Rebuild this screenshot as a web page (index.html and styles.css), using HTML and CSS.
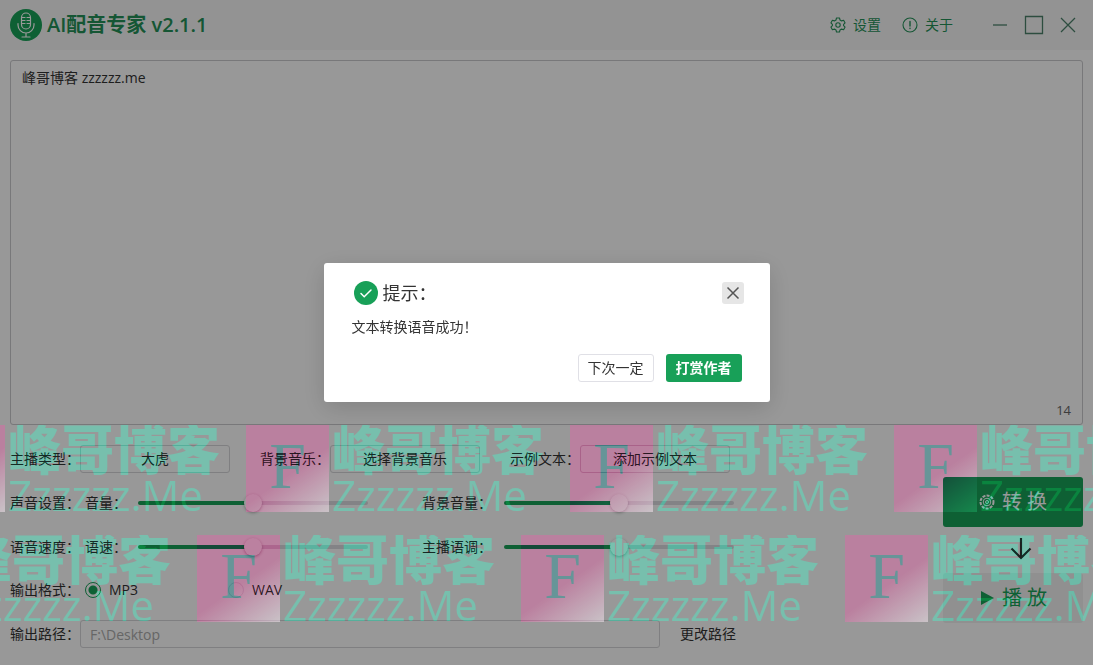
FILE: index.html
```html
<!DOCTYPE html>
<html lang="zh-CN">

<head>
    <meta charset="UTF-8">
    <meta name="viewport" content="width=device-width, initial-scale=1.0">
    <title>AI配音专家 v2.1.1</title>
    <link rel="stylesheet" href="styles.css">
</head>

<body>
    <header class="titlebar">
        <svg class="logo" viewBox="0 0 32 32" fill="none" stroke="#fff" stroke-width="1.2" stroke-linecap="round">
            <circle cx="16" cy="16" r="16" fill="#18a058" stroke="none" />
            <rect x="11.5" y="4" width="9" height="16" rx="4.5" />
            <path d="M12 8.5h3M12 11.5h3M12 14.5h3M17 8.5h3M17 11.5h3M17 14.5h3" />
            <path d="M8 14.5v1.5a8 8 0 0 0 16 0v-1.5M16 24v4M12 28h8" />
        </svg>
        <h1>AI配音专家 v2.1.1</h1>
        <nav class="menu">
            <button type="button" class="menu-button">
                <svg viewBox="0 0 16 16" fill="none" stroke="currentColor" stroke-width="1.1" stroke-linejoin="round">
                    <path d="M6.5 1h3l.5 2 1.6.9 2-.6 1.5 2.6L13.600 7.300v1.400l1.500 1.400-1.500 2.600-2-.6L10 13l-.5 2h-3L6 13l-1.600-.9-2 .6L.9 10.100l1.500-1.400V7.300L.9 5.900l1.500-2.600 2 .6L6 3z" />
                    <circle cx="8" cy="8" r="2.200" />
                </svg>
                设置
            </button>
            <button type="button" class="menu-button">
                <svg viewBox="0 0 16 16" fill="none" stroke="currentColor" stroke-width="1.1" stroke-linecap="round">
                    <circle cx="8" cy="8" r="7" />
                    <path d="M8 4.500v4.500M8 11.300v.2" stroke-width="1.400" />
                </svg>
                关于
            </button>
        </nav>
        <div class="window-buttons">
            <button type="button" aria-label="最小化">
                <svg viewBox="0 0 20 20"><path d="M3 10h14" /></svg>
            </button>
            <button type="button" aria-label="最大化">
                <svg viewBox="0 0 20 20"><path d="M1.500 1.500h17v17h-17z" /></svg>
            </button>
            <button type="button" aria-label="关闭">
                <svg viewBox="0 0 20 20"><path d="M3 3l14 14M17 3L3 17" /></svg>
            </button>
        </div>
    </header>

    <main class="editor">
        <textarea id="text" aria-label="文本">峰哥博客 zzzzzz.me</textarea>
        <span class="count">14</span>
    </main>

    <form class="controls">
        <div class="settings">
            <div class="row">
                <label class="label" for="voice">主播类型：</label>
                <select id="voice" class="field">
                    <option>大虎</option>
                </select>
                <label class="label next" for="music">背景音乐：</label>
                <select id="music" class="field">
                    <option>选择背景音乐</option>
                </select>
                <label class="label next" for="sample">示例文本：</label>
                <select id="sample" class="field">
                    <option>添加示例文本</option>
                </select>
            </div>
            <div class="row">
                <span class="group">声音设置：</span>
                <label class="short" for="volume">音量：</label>
                <input type="range" id="volume" value="50">
                <label class="long" for="music-volume">背景音量：</label>
                <input type="range" id="music-volume" value="50">
            </div>
            <div class="row">
                <span class="group">语音速度：</span>
                <label class="short" for="speed">语速：</label>
                <input type="range" id="speed" value="50">
                <label class="long" for="pitch">主播语调：</label>
                <input type="range" id="pitch" value="50">
            </div>
            <div class="row">
                <span class="group">输出格式：</span>
                <label class="radio"><input type="radio" name="format" checked>MP3</label>
                <label class="radio"><input type="radio" name="format">WAV</label>
            </div>
            <div class="row">
                <label class="label" for="path">输出路径：</label>
                <input type="text" id="path" class="path" value="F:\Desktop" disabled>
                <button type="button" class="text-button">更改路径</button>
            </div>
        </div>

        <div class="actions">
            <button type="button" class="convert">
                <svg viewBox="0 0 16 16" fill="none" stroke="currentColor">
                    <circle cx="8" cy="8" r="6.500" stroke-width="2" stroke-dasharray="3 1.200" />
                    <circle cx="8" cy="8" r="3.800" />
                    <circle cx="8" cy="8" r="1.500" />
                </svg>
                转 换
            </button>
            <svg class="arrow" viewBox="0 0 24 24" fill="none" stroke="#333" stroke-width="2.200">
                <path d="M12 1v20M2.500 11.500L12 21l9.500-9.500" />
            </svg>
            <button type="button" class="play">
                <svg viewBox="0 0 16 16" fill="currentColor"><path d="M2 1l13 7-13 7z" /></svg>
                播 放
            </button>
        </div>

        <div class="watermark" aria-hidden="true">
            <div class="marks first">
                <div class="mark"><b>F</b><p>峰哥博客<span>Zzzzzz.Me</span></p></div>
                <div class="mark"><b>F</b><p>峰哥博客<span>Zzzzzz.Me</span></p></div>
                <div class="mark"><b>F</b><p>峰哥博客<span>Zzzzzz.Me</span></p></div>
                <div class="mark"><b>F</b><p>峰哥博客<span>Zzzzzz.Me</span></p></div>
            </div>
            <div class="marks second">
                <div class="mark"><b>F</b><p>峰哥博客<span>Zzzzzz.Me</span></p></div>
                <div class="mark"><b>F</b><p>峰哥博客<span>Zzzzzz.Me</span></p></div>
                <div class="mark"><b>F</b><p>峰哥博客<span>Zzzzzz.Me</span></p></div>
                <div class="mark"><b>F</b><p>峰哥博客<span>Zzzzzz.Me</span></p></div>
            </div>
        </div>
    </form>

    <div class="mask">
        <div class="dialog" role="dialog" aria-labelledby="dialog-title">
            <div class="dialog-header">
                <svg class="check" viewBox="0 0 24 24" fill="none">
                    <circle cx="12" cy="12" r="12" fill="#18a058" />
                    <path d="M7 12.500l3.200 3.200L17 9" stroke="#fff" stroke-width="1.500" stroke-linecap="round" />
                </svg>
                <h2 id="dialog-title">提示：</h2>
                <button type="button" class="close" aria-label="关闭">
                    <svg viewBox="0 0 14 14"><path d="M1.500 1.500l11 11M12.500 1.500l-11 11" /></svg>
                </button>
            </div>
            <p class="dialog-text">文本转换语音成功！</p>
            <div class="dialog-buttons">
                <button type="button" class="later">下次一定</button>
                <button type="button" class="reward">打赏作者</button>
            </div>
        </div>
    </div>
</body>

</html>
```

FILE: styles.css
```css
* {
    box-sizing: border-box;
}

body {
    display: flex;
    flex-direction: column;
    min-height: 100vh;
    margin: 0;
    background-color: #fdfdfd;
    color: #333;
    font-family: "Open Sans", "Noto Sans CJK SC", sans-serif;
    font-size: 14px;
    line-height: 20px;
}

button,
input,
select,
textarea {
    margin: 0;
    font: inherit;
    color: inherit;
}

button {
    padding: 0;
    border: none;
    background: none;
    cursor: pointer;
}

h1,
h2,
p {
    margin: 0;
}

/* title bar */
.titlebar {
    display: flex;
    align-items: center;
    height: 50px;
    padding: 0 15px 0 10px;
    background-color: #f6f6f6;
    color: #249058;
}

.logo {
    width: 32px;
    height: 32px;
    margin-right: 5px;
}

h1 {
    font-size: 20px;
    font-weight: 600;
    line-height: 28px;
}

.menu {
    display: flex;
    gap: 21px;
    margin-left: auto;
}

.menu-button {
    display: flex;
    align-items: center;
    gap: 7px;
}

.menu-button svg {
    width: 16px;
    height: 16px;
}

.window-buttons {
    display: flex;
    gap: 14px;
    margin-left: 37px;
}

.window-buttons button {
    display: flex;
}

.window-buttons svg {
    width: 20px;
    height: 20px;
    fill: none;
    stroke: #4c806a;
    stroke-width: 1.3;
}

/* text area */
.editor {
    position: relative;
    display: flex;
    flex: 1;
    margin: 10px 10px 0;
}

.editor textarea {
    flex: 1;
    padding: 7px 11px;
    border: 1px solid #c8c8cc;
    border-radius: 3px;
    background: none;
    outline: none;
    resize: none;
}

.count {
    position: absolute;
    right: 12px;
    bottom: 5px;
    color: #666;
    font-size: 13px;
}

/* settings */
.controls {
    position: relative;
    display: flex;
    justify-content: space-between;
    padding: 20px 10px 17px;
}

.settings {
    display: flex;
    flex-direction: column;
    justify-content: space-between;
}

.row {
    display: flex;
    align-items: center;
    height: 28px;
    white-space: nowrap;
}

.label {
    width: 70px;
}

.next {
    margin-left: 30px;
}

.group {
    width: 75px;
}

.short {
    width: 53px;
}

.long {
    width: 82px;
    margin-left: 54px;
}

.field {
    width: 150px;
    height: 28px;
    border: 1px solid #d4d4d8;
    border-radius: 3px;
    background: none;
    appearance: none;
    text-align: center;
    text-align-last: center;
}

input[type="range"] {
    width: 230px;
    height: 18px;
    background: none;
    appearance: none;
}

input[type="range"]::-webkit-slider-runnable-track {
    height: 4px;
    border-radius: 2px;
    background: linear-gradient(to right, #18a058 50%, #dbdbdf 50%);
}

input[type="range"]::-webkit-slider-thumb {
    width: 18px;
    height: 18px;
    margin-top: -7px;
    border-radius: 50%;
    background-color: #fff;
    box-shadow: 0 1px 3px rgba(0, 0, 0, 0.3);
    appearance: none;
}

.radio {
    display: flex;
    align-items: center;
    gap: 8px;
    width: 143px;
}

.radio input {
    width: 16px;
    height: 16px;
    border: 1px solid #e6e6ea;
    border-radius: 50%;
    appearance: none;
}

.radio input:checked {
    border-color: #18a058;
    background: radial-gradient(#18a058 4px, transparent 5px);
}

.path {
    width: 580px;
    height: 28px;
    padding: 0 9px;
    border: 1px solid #d4d4d8;
    border-radius: 3px;
    background: none;
    color: #aaa;
}

.text-button {
    margin-left: 20px;
}

/* convert and play */
.actions {
    display: flex;
    flex-direction: column;
    align-items: center;
    width: 140px;
    margin: 32px 0 25px;
}

.convert,
.play {
    display: flex;
    align-items: center;
    justify-content: center;
    gap: 7px;
    width: 100%;
    height: 50px;
    border-radius: 3px;
    font-size: 20px;
}

.convert {
    background-color: #18a058;
    color: #fff;
}

.play {
    background-color: #f0f1f1;
    color: #18a058;
}

.convert svg,
.play svg {
    width: 16px;
    height: 16px;
}

.arrow {
    width: 24px;
    height: 24px;
    margin: 10px 0 12px 16px;
}

/* watermark */
.watermark {
    position: absolute;
    inset: 0;
    z-index: 20;
    display: flex;
    flex-direction: column;
    gap: 23px;
    overflow: hidden;
    mix-blend-mode: overlay;
    pointer-events: none;
}

.marks {
    display: flex;
    height: 87px;
    overflow: hidden;
}

.first {
    margin-left: -78px;
}

.second {
    margin-left: -127px;
}

.mark {
    display: flex;
    flex: none;
    gap: 3px;
    width: 324px;
}

.mark b {
    width: 83px;
    height: 87px;
    background: linear-gradient(145deg, #aa6288 55%, #bdb4ba);
    color: #427c80;
    font-family: "Liberation Serif", serif;
    font-size: 66px;
    font-weight: normal;
    line-height: 82px;
    text-align: center;
}

.mark p {
    color: #56b09a;
    font-family: "Noto Sans CJK SC", sans-serif;
    font-size: 53px;
    font-weight: 900;
    line-height: 44px;
}

.mark span {
    display: block;
    font-family: "Open Sans", sans-serif;
    font-size: 42px;
    font-weight: 500;
    line-height: 52px;
}

/* message dialog */
.mask {
    position: fixed;
    inset: 0;
    z-index: 10;
    display: flex;
    align-items: center;
    justify-content: center;
    background-color: rgba(0, 0, 0, 0.4);
}

.dialog {
    width: 446px;
    padding: 18px 28px 20px;
    border-radius: 3px;
    background-color: #fff;
    box-shadow: 0 6px 24px rgba(0, 0, 0, 0.15);
}

.dialog-header {
    display: flex;
    align-items: center;
    height: 24px;
    margin-right: -2px;
    padding-left: 2px;
}

.check {
    width: 24px;
    height: 24px;
    margin-right: 5px;
}

h2 {
    font-size: 18px;
    font-weight: normal;
    line-height: 24px;
}

.close {
    display: flex;
    align-items: center;
    justify-content: center;
    width: 22px;
    height: 22px;
    margin-left: auto;
    border-radius: 3px;
    background-color: #e6e6e6;
}

.close svg {
    width: 14px;
    height: 14px;
    fill: none;
    stroke: #555;
    stroke-width: 1.5;
}

.dialog-text {
    margin: 12px 0 17px;
}

.dialog-buttons {
    display: flex;
    justify-content: flex-end;
    gap: 12px;
}

.later,
.reward {
    width: 76px;
    height: 28px;
    border-radius: 3px;
}

.later {
    border: 1px solid #e0e0e6;
}

.reward {
    background-color: #18a058;
    color: #fff;
    font-weight: bold;
}
```
